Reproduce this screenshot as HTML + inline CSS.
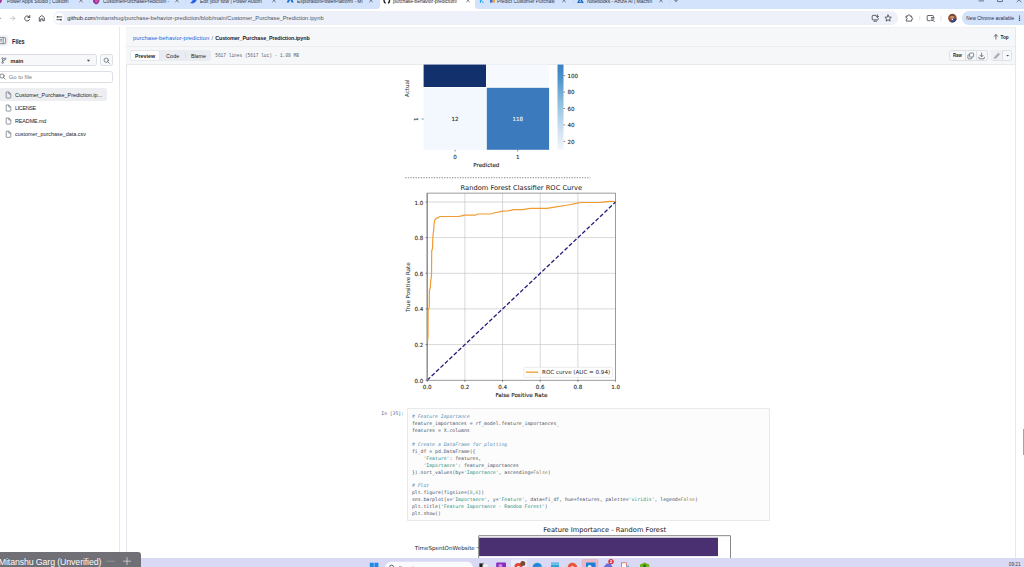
<!DOCTYPE html>
<html lang="en">
<head>
<meta charset="utf-8">
<title>purchase-behavior-prediction/Customer_Purchase_Prediction.ipynb</title>
<style>
*{box-sizing:border-box;margin:0;padding:0}
html,body{width:1024px;height:567px;overflow:hidden;background:#fff}
body{position:relative;font-family:"Liberation Sans",sans-serif;color:#1f2328;-webkit-font-smoothing:antialiased}
.a{position:absolute;white-space:nowrap;line-height:1}
svg{position:absolute;overflow:visible}
/* ---------- browser chrome ---------- */
#tabbar{left:0;top:0;width:1024px;height:8.6px;background:#d4e3fc}
.tab{top:.4px;font-size:4.9px;color:#2c2f38;letter-spacing:-.02px}
#acttab{left:380px;top:-4px;width:95px;height:12.6px;background:#fff;border-radius:3.5px 3.5px 0 0}
#toolbar{left:0;top:8.6px;width:1024px;height:18.4px;background:#fff}
#omni{left:53px;top:11.4px;width:845.2px;height:13.4px;border-radius:6.7px;background:#eef1f9}
#url{left:67.3px;top:16.1px;font-size:5.74px;color:#4f5259}
#url b{font-weight:400;color:#23262b}
#newchrome{left:961.8px;top:11.4px;width:70px;height:13.6px;border-radius:6.8px;background:#d4e3fc}
#nctxt{left:966.3px;top:17.1px;font-size:4.78px;color:#1d2b4f}
/* ---------- github page ---------- */
#page{left:0;top:27px;width:1016px;height:531px;background:#fff}
#side{left:0;top:27px;width:119.6px;height:531px;background:#fff;border-right:.7px solid #e6e9ec}
#main{left:125.7px;top:27px;width:890.2px;height:531px;background:#fff;border-left:.7px solid #e3e6ea;border-right:.7px solid #e6e9ec}
#crumbbar{left:126.4px;top:27px;width:888.8px;height:20px;background:#f6f7f9;border-bottom:1.1px solid #ecedf0;border-top:1.2px solid #f0f1f3}
#toolrow{left:126.4px;top:46.9px;width:888.8px;height:17.7px;background:#f6f7f9;border-bottom:.7px solid #e8eaed}
.gh{font-size:5.5px}
.blue{color:#1a62d6}
.fi{font-size:5.45px;color:#1f2328}


.vt{writing-mode:vertical-rl;transform:rotate(180deg);font-family:"DejaVu Sans","Liberation Sans",sans-serif;font-size:5.58px;color:#1c1c1c;line-height:1;text-align:center}
/* ---------- code cell ---------- */
#cell{left:407.1px;top:407.6px;width:362.8px;height:113px;background:#fcfcfc;border:.7px solid #e9e9e9;border-radius:.8px}
#prompt{left:381.3px;top:412.3px;font-family:"DejaVu Sans Mono","Liberation Mono",monospace;font-size:4.72px;color:#4a5f96}
#code{left:411.9px;top:414.4px;font-family:"DejaVu Sans Mono","Liberation Mono",monospace;font-size:4.81px;line-height:6.91px;color:#4a505c;white-space:pre}
#code i{color:#6390b4;font-style:italic}
#code .s{color:#2f8f7c}
#code .o{color:#5a5f80}
#code .k{color:#a08848}
#code .n{color:#7a9440}
/* ---------- taskbar ---------- */
#taskbar{left:0;top:557.5px;width:1024px;height:9.5px;background:#d9d9f5}
#who{left:-2px;top:552.2px;width:143px;height:16px;background:rgba(106,106,112,.96);border-radius:0 3px 0 0}
</style>
</head>
<body>
<!-- ======== TAB BAR ======== -->
<div class="a" id="tabbar" style="width:380.2px;border-radius:0 0 3.2px 0"></div>
<div class="a" id="tabbar2" style="left:474.9px;top:0;width:550px;height:8.6px;background:#d4e3fc;border-radius:0 0 0 3.2px"></div>
<div class="a tab" style="left:7px">Power Apps Studio | Custom</div>
<div class="a tab" style="left:103px">CustomerPurchasePrediction -</div>
<div class="a tab" style="left:200px">Edit your flow | Power Autom</div>
<div class="a tab" style="left:297px">ExplorationPowerPlatform - Mi</div>
<div class="a tab" style="left:393px;color:#1f2328">purchase-behavior-prediction/</div>
<div class="a tab" style="left:497px">Predict Customer Purchasi</div>
<div class="a tab" style="left:587px">Notebooks - Azure AI | Machin</div>

<!-- ======== TOOLBAR ======== -->
<div class="a" id="toolbar"></div>
<div class="a" id="omni"></div>
<div class="a" style="left:54.1px;top:13.1px;width:10.4px;height:10.4px;border-radius:50%;background:#fff"></div>
<div class="a" id="url"><b>github.com</b>/mitanshug/purchase-behavior-prediction/blob/main/Customer_Purchase_Prediction.ipynb</div>
<div class="a" id="newchrome"></div>
<div class="a" id="nctxt">New Chrome available</div>


<!-- tab favicons, close buttons, window controls -->
<svg width="1024" height="9" viewBox="0 0 1024 9" style="left:0;top:0">
  <g stroke="#3a3f4a" stroke-width=".7" fill="none" stroke-linecap="round">
    <path d="M79.6 -1 L82.4 1.8 M82.4 -1 L79.6 1.8"/>
    <path d="M175.6 -1 L178.4 1.8 M178.4 -1 L175.6 1.8"/>
    <path d="M272.6 -1 L275.4 1.8 M275.4 -1 L272.6 1.8"/>
    <path d="M369.6 -1 L372.4 1.8 M372.4 -1 L369.6 1.8"/>
    <path d="M466.6 -1 L469.4 1.8 M469.4 -1 L466.6 1.8"/>
    <path d="M562.6 -1 L565.4 1.8 M565.4 -1 L562.6 1.8"/>
    <path d="M659.6 -1 L662.4 1.8 M662.4 -1 L659.6 1.8"/>
    <path d="M674.6 0 L676 1.6 L677.4 0" stroke-width=".9"/>
    <path d="M979 .9 H983.6"/>
    <path d="M998 -2 H1002.4 V1.6 H998 Z"/>
    <path d="M1017 -2 L1021 1.8 M1021 -2 L1017 1.8"/>
  </g>
  <g stroke="#c3cde6" stroke-width=".5">
    <path d="M89.5 -1 V3.5 M185.5 -1 V3.5 M282.5 -1 V3.5 M573.5 -1 V3.5 M670 -1 V3.5"/>
  </g>
  <!-- favicons -->
  <ellipse cx="-1" cy="0" rx="3" ry="3.6" fill="#a4379b"/>
  <path d="M92.6 -2 L96.6 -3 L100 -1 L98.6 3 L96 4.4 L93.4 2.6 Z" fill="#8a2a96"/>
  <path d="M94.6 -1 L97 -1.6 L98.6 -.2 L97.8 2.2 L96.2 3 L95 1.8 Z" fill="#d24fa8"/>
  <path d="M190 3 C192 2 193.6 -1 193.4 -3 L197 -3 C197.6 0 195.6 3 192.4 3.4 Z" fill="#2563eb"/>
  <path d="M286.6 2.6 L289.4 -3 L291 -3 L293.8 2.6 L291.6 2.6 L290.2 -.6 L288.8 2.6 Z" fill="#1b6fd1"/>
  <circle cx="386.8" cy=".5" r="3.4" fill="#1b1f23"/>
  <path d="M385.6 3.9 V2 C384.4 1.5 384.6 -.5 385.2 -.9 L388.4 -.9 C389 -.5 389.2 1.5 388 2 V3.9 Z" fill="#fff"/>
  <path d="M480.4 -3 V3 M483.6 -3 L480.8 0 L483.6 3" stroke="#20a8e8" stroke-width="1" fill="none"/>
  <rect x="490" y="-2" width="2.6" height="4.6" fill="#2f6fde"/><rect x="492.6" y="-.6" width="2.4" height="3.2" fill="#f2a33a"/>
  <path d="M577 3 L580.4 -3 L583.8 3 Z" fill="#1f63c9"/><path d="M579 2.2 L580.4 -.4 L581.8 2.2 Z" fill="#7fd0f5"/>
</svg>

<!-- toolbar icons -->
<svg width="1024" height="28" viewBox="0 0 1024 28" style="left:0;top:0">
  <g stroke="#45484f" stroke-width=".75" fill="none" stroke-linecap="round" stroke-linejoin="round">
    <path d="M-3 18.3 H.8" stroke="#8d9299" stroke-width=".9"/>
    <path d="M10.6 18.3 H14.8 M12.9 16.3 L14.9 18.3 L12.9 20.3" stroke="#b9bdc4" stroke-width=".85"/>
    <path d="M29.5 17.2 A2.55 2.55 0 1 0 29.6 19.6 M29.8 15.5 V17.4 H27.9" stroke-width=".95"/>
    <path d="M39.3 20.8 V17.5 L41.8 15.5 L44.3 17.5 V20.8 H42.8 V18.9 H40.8 V20.8 Z" stroke-width=".9"/>
    <path d="M58.8 16.9 H61.8 M56.8 19.7 H59.6" stroke-width=".85"/>
    <circle cx="57.6" cy="16.9" r=".95" fill="#45484f" stroke="none"/><circle cx="60.9" cy="19.7" r=".95" fill="#45484f" stroke="none"/>
    <!-- install / cast -->
    <path d="M876 15.4 H872.9 C872.5 15.4 872.2 15.7 872.2 16.1 V19.2 C872.2 19.6 872.5 19.9 872.9 19.9 H877.6 C878 19.9 878.3 19.6 878.3 19.2 V18.6 M873.9 21.2 H876.7 M877.4 14.9 V17.3 M876.2 16.3 L877.4 17.5 L878.6 16.3" stroke-width=".85"/>
    <!-- star -->
    <path d="M888.1 15 L889.05 17.05 L891.3 17.3 L889.65 18.85 L890.1 21.1 L888.1 19.95 L886.1 21.1 L886.55 18.85 L884.9 17.3 L887.15 17.05 Z" stroke-width=".85"/>
    <!-- extensions -->
    <path d="M906.3 16.1 H907.9 C907.5 14.3 910.3 14.3 909.9 16.1 H911.6 V17.7 C913 17.4 913 19.9 911.6 19.6 V21.1 H906.3 V19.5 C907.7 19.8 907.7 17.3 906.3 17.6 Z" stroke-width=".85"/>
    <!-- media -->
    <path d="M933.4 16.9 V16.2 C933.4 15.8 933.1 15.5 932.7 15.5 H927.9 C927.5 15.5 927.2 15.8 927.2 16.2 V20 C927.2 20.4 927.5 20.7 927.9 20.7 H930.2 M931.4 17.6 H934 M931.4 19 H934 M931.4 20.4 H932.8 M933.4 20.6 L934.3 21.6" stroke-width=".85"/>
    <!-- menu dots -->
  </g>
  <g fill="#2a3350"><circle cx="1019.5" cy="16.1" r=".7"/><circle cx="1019.5" cy="18.2" r=".7"/><circle cx="1019.5" cy="20.3" r=".7"/></g>
  <path d="M919.8 15.4 V21 M941 15.4 V21" stroke="#c9d3ee" stroke-width=".6"/>
  <circle cx="952.4" cy="18.1" r="4.3" fill="#93543a"/>
  <circle cx="952.1" cy="16.9" r="2" fill="#c8906e"/>
  <path d="M950 16.2 C950.4 14.2 953.9 14.2 954.2 16.2 C953.3 15.4 950.9 15.4 950 16.2Z" fill="#3a251c"/>
  <path d="M950.2 21.8 A4.3 4.3 0 0 0 956.6 19 C955.4 18.2 953.6 18.8 952.6 19.6 Z" fill="#2a3f86"/>
  <path d="M951.4 19.6 L952.8 18.8 L953.4 20.4 Z" fill="#f1f1f1"/>
</svg>

<!-- ======== PAGE ======== -->
<div class="a" id="page"></div>
<div class="a" id="side"></div>
<div class="a" id="main"></div>
<div class="a" id="crumbbar"></div>
<div class="a" id="toolrow"></div>


<!-- breadcrumb -->
<div class="a gh blue" id="bc1" style="left:133px;top:35.5px;font-size:5.75px;letter-spacing:.06px">purchase-behavior-prediction</div>
<div class="a gh" id="bc2" style="left:211.4px;top:35.5px;color:#59636e">/</div>
<div class="a gh" id="bc3" style="left:215.2px;top:35.5px;font-weight:700;font-size:5.45px;letter-spacing:-.12px;color:#1f2328">Customer_Purchase_Prediction.ipynb</div>
<svg width="8" height="8" viewBox="0 0 8 8" style="left:992.6px;top:33.3px"><path d="M2.9 6.1 V1.7 M1.3 3.3 L2.9 1.6 L4.5 3.3" stroke="#2f353c" stroke-width=".7" fill="none" stroke-linecap="round" stroke-linejoin="round"/></svg>
<div class="a gh" id="toptxt" style="left:1000.4px;top:36.1px;font-size:4.7px;font-weight:700;color:#25292e">Top</div>

<!-- segmented control -->
<div class="a" style="left:130.5px;top:50px;width:80.7px;height:10.8px;background:#e9ecf0;border-radius:2.4px"></div>
<div class="a" style="left:130.4px;top:49.9px;width:29.7px;height:10.9px;background:#fff;border:.5px solid #e4e7eb;border-radius:2.6px"></div>
<div class="a" style="left:185.3px;top:53.4px;width:.5px;height:4.4px;background:#dadee3"></div>
<div class="a gh" id="sg1" style="top:53.6px;left:135px;font-weight:700;color:#1f2328;font-size:5.3px">Preview</div>
<div class="a gh" id="sg2" style="top:53.6px;left:166.1px;letter-spacing:.18px;color:#1f2328;font-size:5.3px">Code</div>
<div class="a gh" id="sg3" style="top:53.6px;left:190.9px;color:#1f2328;font-size:5.3px">Blame</div>
<div class="a" id="meta" style="left:215.2px;top:53.6px;font-family:'Liberation Mono',monospace;font-size:4.5px;color:#59636e">5617 lines (5617 loc) · 1.09 MB</div>

<!-- right buttons -->
<div class="a" style="left:949.2px;top:49.7px;width:38.4px;height:10.9px;background:#f6f8fa;border:.55px solid #dde1e6;border-radius:2.4px"></div>
<div class="a" style="left:965.3px;top:50.2px;width:.5px;height:10px;background:#dde1e6"></div>
<div class="a" style="left:976.2px;top:50.2px;width:.5px;height:10px;background:#dde1e6"></div>
<div class="a gh" id="raw" style="left:953px;top:53.2px;font-size:5.3px;font-weight:700;color:#25292e;transform:scaleX(.8);transform-origin:0 50%">Raw</div>
<svg width="8" height="8" viewBox="0 0 8 8" style="left:967.2px;top:51.6px"><g stroke="#4a525c" stroke-width=".65" fill="none" stroke-linejoin="round"><rect x="2.6" y="1" width="4" height="4" rx=".7"/><path d="M2.4 2.8 H1.5 C1.1 2.8 .9 3 .9 3.4 V6.2 C.9 6.6 1.1 6.8 1.5 6.8 H4.3 C4.7 6.8 4.9 6.6 4.9 6.2 V5.3"/></g></svg>
<svg width="8" height="8" viewBox="0 0 8 8" style="left:978.1px;top:51.6px"><g stroke="#4a525c" stroke-width=".7" fill="none" stroke-linecap="round" stroke-linejoin="round"><path d="M3.6 1 V4.6 M2 3.2 L3.6 4.8 L5.2 3.2 M.9 5.2 V6.2 C.9 6.6 1.1 6.8 1.5 6.8 H5.7 C6.1 6.8 6.3 6.6 6.3 6.2 V5.2"/></g></svg>
<div class="a" style="left:990.5px;top:49.7px;width:21.4px;height:10.9px;background:#f6f8fa;border:.55px solid #dde1e6;border-radius:2.4px"></div>
<div class="a" style="left:991px;top:50.2px;width:10.6px;height:9.9px;background:#eef0f3;border-radius:2px 0 0 2px"></div>
<div class="a" style="left:1001.6px;top:50.2px;width:.5px;height:10px;background:#dde1e6"></div>
<svg width="8" height="8" viewBox="0 0 8 8" style="left:992.6px;top:51.6px"><path d="M1.2 6.6 L1.6 4.9 L5 1.5 C5.3 1.2 5.7 1.2 6 1.5 L6.3 1.8 C6.6 2.1 6.6 2.5 6.3 2.8 L2.9 6.2 Z" stroke="#9aa1aa" stroke-width=".5" fill="#a6acb4" stroke-linejoin="round"/></svg>
<svg width="6" height="4" viewBox="0 0 6 4" style="left:1004.6px;top:54.3px"><path d="M1.4 1 H4 L2.7 2.4 Z" fill="#3a424c"/></svg>

<!-- sidebar -->
<div class="a" style="left:-3px;top:35px;width:11.2px;height:11.4px;background:#eff1f4;border-radius:2.4px"></div>
<svg width="10" height="10" viewBox="0 0 10 10" style="left:-2.4px;top:36.4px"><g stroke="#59636e" stroke-width=".7" fill="none"><rect x="1" y="1.6" width="6.6" height="6" rx=".8"/><path d="M5.2 1.6 V7.6 M2.2 3.6 H4 M2.2 5 H4"/></g></svg>
<div class="a" id="files" style="left:11.8px;top:38.5px;font-size:6.6px;font-weight:700;color:#1f2328;transform:scaleX(.84);transform-origin:0 50%">Files</div>

<div class="a" style="left:-3px;top:54.2px;width:99.6px;height:12.3px;background:#f6f8fa;border:.6px solid #dbdfe4;border-radius:2.4px"></div>
<svg width="8" height="8" viewBox="0 0 8 8" style="left:.6px;top:57.2px"><g stroke="#4d5660" stroke-width=".7" fill="none"><circle cx="1.6" cy="1.5" r=".75"/><circle cx="1.6" cy="5.6" r=".75"/><circle cx="4.2" cy="1.7" r=".75"/><path d="M1.6 2.3 V4.8 M4.2 2.5 C4.2 3.6 1.6 3.4 1.6 4.4"/></g></svg>
<div class="a" id="brn" style="left:10.6px;top:58.7px;font-size:5.5px;font-weight:700;color:#25292e">main</div>
<svg width="6" height="4" viewBox="0 0 6 4" style="left:86.2px;top:59.3px"><path d="M.8 .8 H4.2 L2.5 2.7 Z" fill="#4a525c"/></svg>
<div class="a" style="left:100px;top:54.2px;width:12.8px;height:12.3px;background:#f6f8fa;border:.6px solid #dbdfe4;border-radius:2.4px"></div>
<svg width="8" height="8" viewBox="0 0 8 8" style="left:102.7px;top:56.7px"><g stroke="#59636e" stroke-width=".75" fill="none" stroke-linecap="round"><circle cx="3.2" cy="3.2" r="2.1"/><path d="M4.8 4.8 L6.3 6.3"/></g></svg>

<div class="a" style="left:-3px;top:70.5px;width:115.7px;height:12.2px;background:#fff;border:.6px solid #dbdfe4;border-radius:2.4px"></div>
<svg width="8" height="8" viewBox="0 0 8 8" style="left:-.6px;top:73.3px"><g stroke="#59636e" stroke-width=".75" fill="none" stroke-linecap="round"><circle cx="3" cy="3" r="2.1"/><path d="M4.6 4.6 L6.1 6.1"/></g></svg>
<div class="a" id="gtf" style="left:8.8px;top:74.6px;font-size:5.8px;color:#737b84">Go to file</div>

<div class="a" style="left:-3px;top:88.2px;width:109.6px;height:12.6px;background:#eceef1;border-radius:2.4px"></div>
<svg width="8" height="52" viewBox="0 0 8 52" style="left:5.3px;top:90.6px"><g stroke="#59636e" stroke-width=".65" fill="none" stroke-linejoin="round">
<path d="M1.2 1 H3.9 L5.8 2.9 V6.6 C5.8 6.9 5.6 7.1 5.3 7.1 H1.7 C1.4 7.1 1.2 6.9 1.2 6.6 Z M3.8 1.1 V3 H5.7"/>
<path transform="translate(0 13)" d="M1.2 1 H3.9 L5.8 2.9 V6.6 C5.8 6.9 5.6 7.1 5.3 7.1 H1.7 C1.4 7.1 1.2 6.9 1.2 6.6 Z M3.8 1.1 V3 H5.7"/><path transform="translate(0 26)" d="M1.2 1 H3.9 L5.8 2.9 V6.6 C5.8 6.9 5.6 7.1 5.3 7.1 H1.7 C1.4 7.1 1.2 6.9 1.2 6.6 Z M3.8 1.1 V3 H5.7"/><path transform="translate(0 39.2)" d="M1.2 1 H3.9 L5.8 2.9 V6.6 C5.8 6.9 5.6 7.1 5.3 7.1 H1.7 C1.4 7.1 1.2 6.9 1.2 6.6 Z M3.8 1.1 V3 H5.7"/></g></svg>
<div class="a fi" id="f1" style="left:15px;top:92.7px">Customer_Purchase_Prediction.ip...</div>
<div class="a fi" id="f2" style="left:15px;top:105.7px;letter-spacing:-.36px">LICENSE</div>
<div class="a fi" id="f3" style="left:15px;top:118.7px;letter-spacing:-.12px">README.md</div>
<div class="a fi" id="f4" style="left:15px;top:131.9px">customer_purchase_data.csv</div>


<!-- ======== NOTEBOOK OUTPUT : confusion matrix + ROC ======== -->
<svg id="plots" width="1024" height="567" viewBox="0 0 1024 567" text-rendering="geometricPrecision" style="left:0;top:0;font-family:'DejaVu Sans','Liberation Sans',sans-serif">
  <defs>
    <linearGradient id="cb" x1="0" y1="0" x2="0" y2="1">
      <stop offset="0" stop-color="#3a7fc0"/><stop offset=".18" stop-color="#4f96cb"/><stop offset=".45" stop-color="#8fbfde"/><stop offset=".72" stop-color="#c8dcef"/><stop offset="1" stop-color="#f2f7fd"/>
    </linearGradient>
  </defs>
  <!-- confusion matrix -->
  <rect x="423.6" y="64.6" width="62.4" height="22.4" fill="#12306c"/>
  <rect x="486.8" y="64.6" width="62.3" height="22.4" fill="#f6faff"/>
  <rect x="423.6" y="87.8" width="62.4" height="62" fill="#f3f7fe"/>
  <rect x="486.8" y="87.8" width="62.3" height="62" fill="#3b7bbd"/>
  <rect x="557.5" y="64.6" width="6" height="85.2" fill="url(#cb)"/>
  <g stroke="#333" stroke-width=".6" fill="none">
    <path d="M421.6 119 h2 M455 149.9 v1.6 M517.8 149.9 v1.6 M563.6 75.6 h1.5 M563.6 92.1 h1.5 M563.6 108.5 h1.5 M563.6 124.9 h1.5 M563.6 141.4 h1.5"/>
  </g>
  <g font-size="5.58" fill="#1c1c1c" stroke="#1c1c1c" stroke-width=".1">
    <text x="455" y="120.6" text-anchor="middle">12</text>
    <text x="517.8" y="120.6" text-anchor="middle" fill="#f4f8ff" stroke="#f4f8ff">118</text>
    <text x="455" y="158.8" text-anchor="middle">0</text>
    <text x="517.8" y="158.8" text-anchor="middle">1</text>
    <text x="486.3" y="166.6" text-anchor="middle" id="predl">Predicted</text>
    
    
    <text x="567.4" y="77.8">100</text><text x="567.4" y="94.3">80</text><text x="567.4" y="110.7">60</text><text x="567.4" y="127.1">40</text><text x="567.4" y="143.6">20</text>
  </g>
  <path d="M405.2 177.8 H590.4" stroke="#80858c" stroke-width="1.1" stroke-dasharray="1.3 1.3"/>
  <!-- ROC -->
  <text x="521.4" y="189.7" font-size="6.7" fill="#161616" text-anchor="middle" id="roct">Random Forest Classifier ROC Curve</text>
  <g stroke="#bdbdbd" stroke-width=".6" fill="none"><path d="M464.9 193.1 V380.2"/><path d="M502.6 193.1 V380.2"/><path d="M540.2 193.1 V380.2"/><path d="M577.9 193.1 V380.2"/><path d="M427.2 344.6 H615.6"/><path d="M427.2 308.9 H615.6"/><path d="M427.2 273.3 H615.6"/><path d="M427.2 237.6 H615.6"/><path d="M427.2 202.0 H615.6"/></g>
  <path d="M427.2 380.2 L615.6 202.0" stroke="#221d7a" stroke-width="1.3" stroke-dasharray="4.1 2" fill="none"/>
  <rect x="427.2" y="193.1" width="188.4" height="187.1" fill="none" stroke="#5a5a5a" stroke-width=".6"/>
  <path d="M427.2 193.1 V380.2" stroke="#8e8e8e" stroke-width="1.3"/>
  <path d="M427.6 341.0 L428.0 337.5 L428.1 310.0 L429.2 307.6 L429.4 290.5 L430.3 287.5 L430.6 282.0 L431.5 275.5 L431.7 251.0 L432.6 248.0 L432.8 238.0 L433.4 232.0 L433.8 228.5 L434.2 222.5 L434.8 220.0 L436.2 218.4 L438.4 217.6 L440.0 216.5 L458.8 216.5 L461.5 215.8 L464.4 215.2 L475.0 215.2 L478.1 214.0 L490.6 214.0 L495.6 212.5 L498.6 212.1 L502.5 211.2 L507.5 211.0 L513.8 209.6 L522.5 209.6 L530.8 208.4 L547.0 208.3 L556.0 206.9 L568.2 205.0 L575.0 203.6 L580.8 202.5 L599.5 202.5 L605.0 201.8 L609.5 201.3 L615.5 201.5" stroke="#f09c30" stroke-width="1.2" fill="none" stroke-linejoin="round"/>
  <g stroke="#333" stroke-width=".6"><path d="M427.2 380.2 v1.6"/><path d="M464.9 380.2 v1.6"/><path d="M502.6 380.2 v1.6"/><path d="M540.2 380.2 v1.6"/><path d="M577.9 380.2 v1.6"/><path d="M615.6 380.2 v1.6"/><path d="M427.2 380.2 h-1.6"/><path d="M427.2 344.6 h-1.6"/><path d="M427.2 308.9 h-1.6"/><path d="M427.2 273.3 h-1.6"/><path d="M427.2 237.6 h-1.6"/><path d="M427.2 202.0 h-1.6"/></g>
  <g font-size="5.58" fill="#1c1c1c" stroke="#1c1c1c" stroke-width=".1"><text x="427.2" y="389" text-anchor="middle">0.0</text><text x="464.9" y="389" text-anchor="middle">0.2</text><text x="502.6" y="389" text-anchor="middle">0.4</text><text x="540.2" y="389" text-anchor="middle">0.6</text><text x="577.9" y="389" text-anchor="middle">0.8</text><text x="615.6" y="389" text-anchor="middle">1.0</text><text x="423.4" y="382.7" text-anchor="end">0.0</text><text x="423.4" y="347.1" text-anchor="end">0.2</text><text x="423.4" y="311.4" text-anchor="end">0.4</text><text x="423.4" y="275.8" text-anchor="end">0.6</text><text x="423.4" y="240.1" text-anchor="end">0.8</text><text x="423.4" y="204.5" text-anchor="end">1.0</text>
    <text x="521.4" y="396.8" text-anchor="middle" id="fprl">False Positive Rate</text>
    
  </g>
  <rect x="523.9" y="367.3" width="88.7" height="10" rx=".9" fill="#fff" fill-opacity=".85" stroke="#d6d6d6" stroke-width=".45"/>
  <path d="M526 372.2 H538.2" stroke="#f09c30" stroke-width="1.3"/>
  <text x="542" y="373.9" font-size="5.58" fill="#1c1c1c" id="legl">ROC curve (AUC = 0.94)</text>
</svg>



<div class="a vt" id="actl" style="left:404.8px;top:68px;height:40px">Actual</div>
<div class="a vt" id="onel" style="left:414.4px;top:109px;height:20px">1</div>
<div class="a vt" id="tprl" style="left:405.5px;top:247.2px;height:80px">True Positive Rate</div>

<!-- ======== CODE CELL ======== -->
<div class="a" id="cell"></div>
<div class="a" id="prompt">In [35]:</div>
<div class="a" id="code"><i># Feature Importance</i>
feature_importances <span class="o">=</span> rf_model<span class="o">.</span>feature_importances_
features <span class="o">=</span> X<span class="o">.</span>columns

<i># Create a DataFrame for plotting</i>
fi_df <span class="o">=</span> pd<span class="o">.</span>DataFrame({
    <span class="s">'Feature'</span>: features,
    <span class="s">'Importance'</span>: feature_importances
})<span class="o">.</span>sort_values(by<span class="o">=</span><span class="s">'Importance'</span>, ascending<span class="o">=</span><span class="k">False</span>)

<i># Plot</i>
plt<span class="o">.</span>figure(figsize<span class="o">=</span>(<span class="n">8</span>,<span class="n">6</span>))
sns<span class="o">.</span>barplot(x<span class="o">=</span><span class="s">'Importance'</span>, y<span class="o">=</span><span class="s">'Feature'</span>, data<span class="o">=</span>fi_df, hue<span class="o">=</span>features, palette<span class="o">=</span><span class="s">'viridis'</span>, legend<span class="o">=</span><span class="k">False</span>)
plt<span class="o">.</span>title(<span class="s">'Feature Importance - Random Forest'</span>)
plt<span class="o">.</span>show()</div>

<!-- ======== FEATURE IMPORTANCE CHART ======== -->
<svg width="1024" height="567" viewBox="0 0 1024 567" style="left:0;top:0;font-family:'DejaVu Sans','Liberation Sans',sans-serif">
  <text x="604.7" y="531.9" font-size="6.7" fill="#161616" text-anchor="middle" id="fit">Feature Importance - Random Forest</text>
  <rect x="478.8" y="535.8" width="251.8" height="26" fill="#fff" stroke="#3a3a3a" stroke-width=".6"/>
  <rect x="479.1" y="537.7" width="238.9" height="18.4" fill="#4a3071"/>
  <path d="M476.6 547.6 h2.2" stroke="#333" stroke-width=".5"/>
  <text x="474.8" y="549.6" font-size="5.58" fill="#1c1c1c" text-anchor="end" id="tsw">TimeSpentOnWebsite</text>
</svg>

<!-- ======== TASKBAR ======== -->
<div class="a" id="taskbar"></div>

<svg width="1024" height="10" viewBox="0 557 1024 10" style="left:0;top:557px;overflow:hidden">
  <!-- windows logo -->
  <path d="M369.8 562.7 h4 v4.4 h-4 Z M374.4 562.7 h4 v4.4 h-4 Z" fill="#1f8ae6"/>
  <!-- search pill -->
  <rect x="385.3" y="561.8" width="87.6" height="12" rx="5.6" fill="#fbfbfe"/>
  <circle cx="391.6" cy="567" r="1.9" fill="none" stroke="#2b2b2b" stroke-width=".7"/>
  <text x="398.6" y="569.9" font-size="5.2" fill="#77777d" font-family="'Liberation Sans',sans-serif">Search</text>
  <!-- task view -->
  <rect x="479.4" y="563.4" width="4.2" height="4" fill="#222"/><rect x="482.6" y="564.2" width="5" height="3" fill="#ededf2"/>
  <!-- onenote -->
  <rect x="496.2" y="562.6" width="9.8" height="5" rx="1" fill="#8a2bbd"/><rect x="498.6" y="564.2" width="3.6" height="3" fill="#c98be6"/>
  <!-- chrome w/ avatar -->
  <rect x="511" y="559.6" width="16" height="8" rx="1.4" fill="#ebeafb"/>
  <circle cx="518.4" cy="567" r="4" fill="#e14a3b"/><circle cx="518.4" cy="567.6" r="1.6" fill="#fff"/>
  <circle cx="522.8" cy="563.4" r="2.5" fill="#7a4a35"/>
  <!-- edge -->
  <circle cx="537.2" cy="567.4" r="4.7" fill="#1fb3c9"/><path d="M533 567.4 a4.5 4.5 0 0 1 8.6 -1.4 Z" fill="#2d7fe0"/>
  <!-- calendar -->
  <rect x="551" y="562.6" width="8" height="5" fill="#2ea3d6"/><rect x="551" y="563.6" width="8" height=".9" fill="#bfe6f7"/>
  <!-- office/powerpoint -->
  <circle cx="572.4" cy="567.6" r="4.8" fill="#e8563a"/><circle cx="572.4" cy="567.4" r="1.7" fill="#f7c6b8"/>
  <!-- active outlook -->
  <rect x="582.2" y="559.4" width="15.8" height="8" rx="1.2" fill="#e9b9c7" stroke="#d99aae" stroke-width=".4"/>
  <rect x="586" y="562.6" width="9.6" height="5" rx=".8" fill="#1f7fd6"/><circle cx="589.6" cy="567" r="2" fill="#dff0ff"/>
  <!-- teams -->
  <path d="M603.6 567 l3 -3.6 h3.6 l2.4 3.6 Z" fill="#6a6fd6"/>
  <circle cx="611" cy="561.6" r="2.7" fill="#d62f2f"/>
  <text x="611" y="563.4" font-size="4.4" font-weight="700" fill="#fff" text-anchor="middle" font-family="'Liberation Sans',sans-serif">2</text>
  <!-- doc -->
  <rect x="621.4" y="562.8" width="5.2" height="5" fill="#fff" stroke="#d4553f" stroke-width=".7"/><rect x="626.4" y="565.6" width="2.6" height="2" fill="#5fb3e8"/>
  <!-- green -->
  <path d="M640 567 v-2.6 l4.6 -2 l4.6 2 v2.6 Z" fill="#6fb51f"/><rect x="643.4" y="564.6" width="2.4" height="3" fill="#2f6d12"/>
</svg>
<div class="a" id="clock" style="left:1008.8px;top:562.9px;font-size:4.7px;color:#3a3a44">09:21</div>
<div class="a" style="left:1022.7px;top:428.5px;width:1.4px;height:26.6px;background:#a3a3a6"></div>
<div class="a" style="left:1016.6px;top:27px;width:7.4px;height:530.5px;background:#fff"></div>
<div class="a" style="left:1022.7px;top:428.5px;width:1.4px;height:26.6px;background:#a3a3a6"></div>
<div class="a" id="who"></div>
<div class="a" id="whotxt" style="left:-1.2px;top:557.8px;font-size:8.8px;color:#fbfbfc;letter-spacing:-.12px">Mitanshu Garg (Unverified)</div>
<svg width="40" height="16" viewBox="100 552 40 16" style="left:100px;top:552px"><path d="M106.4 561.2 H115" stroke="#94959b" stroke-width=".9"/><path d="M123 561.2 H131 M127 557.2 V565.2" stroke="#e4e4e8" stroke-width=".7"/></svg>
</body>
</html>
